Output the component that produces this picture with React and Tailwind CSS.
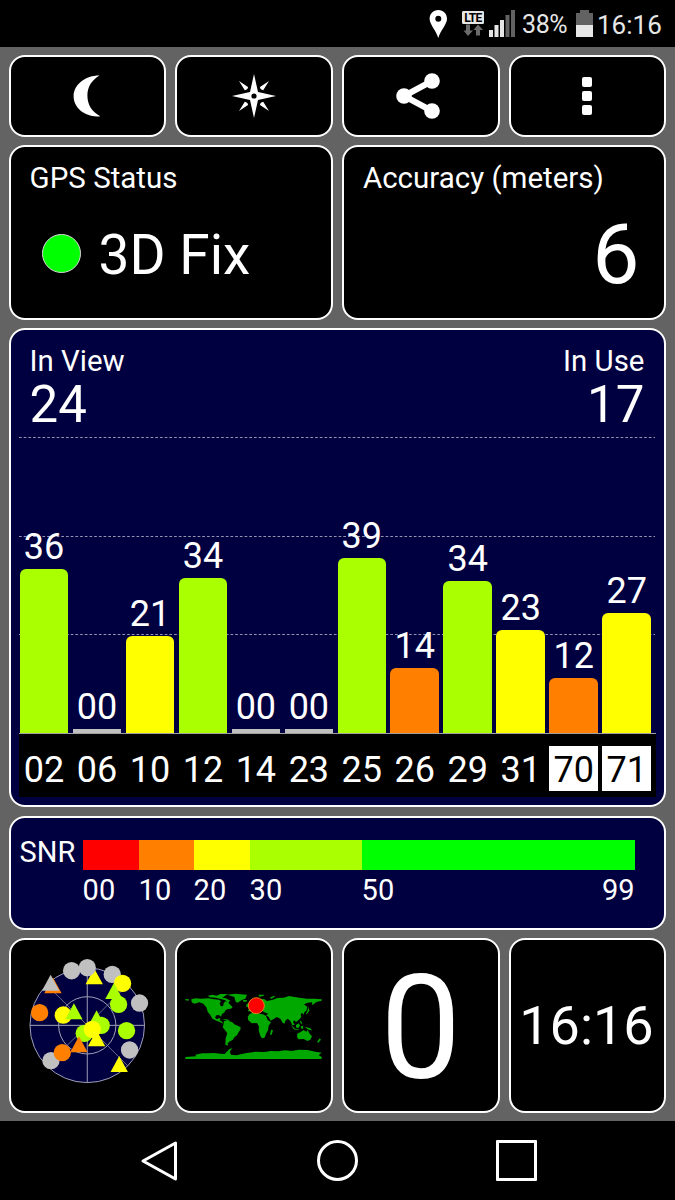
import React from "react";

const satellites = [
  { id: "02", snr: "36", height: 164, color: "bg-[#aaff00]" },
  { id: "06", snr: "00", height: 4.5, color: "bg-[#c0c0c0]", flat: true },
  { id: "10", snr: "21", height: 97, color: "bg-[#ffff00]" },
  { id: "12", snr: "34", height: 155.5, color: "bg-[#aaff00]" },
  { id: "14", snr: "00", height: 4.5, color: "bg-[#c0c0c0]", flat: true },
  { id: "23", snr: "00", height: 4.5, color: "bg-[#c0c0c0]", flat: true },
  { id: "25", snr: "39", height: 175, color: "bg-[#aaff00]" },
  { id: "26", snr: "14", height: 65, color: "bg-[#ff8000]" },
  { id: "29", snr: "34", height: 152, color: "bg-[#aaff00]" },
  { id: "31", snr: "23", height: 103, color: "bg-[#ffff00]" },
  { id: "70", snr: "12", height: 55, color: "bg-[#ff8000]", glonass: true },
  { id: "71", snr: "27", height: 120.5, color: "bg-[#ffff00]", glonass: true },
];

const snrScale = [
  { label: "00", className: "w-[56px]", color: "bg-[#ff0000]" },
  { label: "10", className: "w-[55px]", color: "bg-[#ff8000]" },
  { label: "20", className: "w-[56px]", color: "bg-[#ffff00]" },
  { label: "30", className: "w-[112px]", color: "bg-[#aaff00]" },
  { label: "50", className: "flex-1", color: "bg-[#00ff00]" },
];

const GRAY = "#c0c0c0";
const YELLOW = "#ffff00";
const LIME = "#aaff00";
const ORANGE = "#ff8000";

// drawn in order, later markers cover earlier ones
const skyMarkers = [
  { type: "circle", x: 185, y: 77, fill: GRAY },
  { type: "triangle", x: 253, y: 97, fill: YELLOW },
  { type: "circle", x: 232, y: 68, fill: GRAY },
  { type: "circle", x: 307, y: 88, fill: GRAY },
  { type: "circle", x: 338, y: 115, fill: YELLOW },
  { type: "circle", x: 389, y: 174, fill: GRAY },
  { type: "circle", x: 326, y: 178, fill: LIME },
  { type: "triangle", x: 312, y: 141, fill: LIME },
  { type: "triangle", x: 129, y: 124, fill: ORANGE },
  { type: "triangle", x: 122, y: 116, fill: GRAY },
  { type: "circle", x: 89, y: 203, fill: ORANGE },
  { type: "circle", x: 160, y: 210, fill: YELLOW },
  { type: "triangle", x: 192, y: 202, fill: LIME },
  { type: "circle", x: 274, y: 241, fill: LIME },
  { type: "triangle", x: 260, y: 223, fill: LIME },
  { type: "circle", x: 223, y: 265, fill: LIME },
  { type: "triangle", x: 260, y: 283, fill: YELLOW },
  { type: "circle", x: 247, y: 253, fill: YELLOW },
  { type: "circle", x: 350, y: 257, fill: LIME },
  { type: "circle", x: 359, y: 315, fill: GRAY },
  { type: "circle", x: 123, y: 347, fill: GRAY },
  { type: "circle", x: 157, y: 323, fill: ORANGE },
  { type: "triangle", x: 207, y: 301, fill: ORANGE },
  { type: "triangle", x: 328, y: 360, fill: YELLOW },
];

const Panel = ({ className = "", children }) => (
  <div className={`rounded-[16px] border-2 border-white ${className}`}>
    {children}
  </div>
);

const StatusBar = () => (
  <div className="flex h-[47px] items-start bg-black pl-[429px] text-[#e6e6e6]">
    <svg className="mt-[10px] h-[28px] w-[18px]" viewBox="0 0 18 28">
      <path
        fill="#fff"
        fillRule="evenodd"
        d="M9.3 0C4.4 0 .6 3.8 .6 8.8C.6 14.5 7 20.5 9.3 28C11.5 20.5 18 14.5 18 8.8C18 3.8 14.2 0 9.3 0ZM9.3 5.7a3 3 0 1 1 0 6a3 3 0 1 1 0-6Z"
      />
    </svg>
    <div className="mt-[11px] ml-[15px] flex w-[22px] flex-col items-center">
      <div className="flex h-[13px] w-[22px] items-center justify-center rounded-[1px] border border-[#e6e6e6] bg-[#e6e6e6] text-[12px] leading-none font-bold tracking-[-0.6px] text-black">
        LTE
      </div>
      <svg className="h-[12px] w-[20px]" viewBox="0 0 20 12" fill="#6b6b6b">
        <path d="M3 .5h4v6h3L5 12 .5 6.5H3zM13 11.5h4V6h3L15 .5 10.5 6H13z" />
      </svg>
    </div>
    <svg className="mt-[10px] ml-[4px] h-[27px] w-[28px]" viewBox="0 0 28 27">
      <path fill="#e6e6e6" d="M1 20h4v7H1zM6.5 15h4v12h-4zM12 10h4v17h-4z" />
      <path fill="#626262" d="M17.5 5h4v22h-4zM23 0h4v27h-4z" />
    </svg>
    <span className="mt-[12px] ml-[6px] w-[46px] text-[25px] leading-none tracking-[-0.4px]">
      38%
    </span>
    <svg className="mt-[10px] ml-[8px] h-[27px] w-[17px]" viewBox="0 0 17 27">
      <path fill="#626262" d="M4 0h9v3h4v12H0V3h4z" />
      <path fill="#e6e6e6" d="M0 15h17v12H0z" />
    </svg>
    <span className="mt-[12px] ml-[4px] text-[26px] leading-none">16:16</span>
  </div>
);

const ToolBar = () => (
  <div className="grid h-[82px] grid-cols-4 gap-[8.8px]">
    <Panel className="flex items-center justify-center bg-black">
      <svg className="mr-px h-[44px] w-[44px]" viewBox="0 0 44 44" fill="#fff">
        <path d="M34.6 1.4C22 1 8.6 9.5 8.6 22.3C8.6 35 22 44 35.3 42.2C26.5 37.5 22.4 30.5 22.4 21.5C22.4 13 26.5 6 34.6 1.4Z" />
      </svg>
    </Panel>
    <Panel className="flex items-center justify-center bg-black">
      <svg className="h-[44px] w-[44px]" viewBox="0 0 44 44" fill="#fff">
        <path
          fillRule="evenodd"
          d="M22 0 26 18 44 22 26 26 22 44 18 26 0 22 18 18ZM22 19.4a2.6 2.6 0 1 0 0 5.2a2.6 2.6 0 1 0 0-5.2Z"
        />
        <path d="M7 7 16 13Q16 15.5 12.8 16.2ZM37 7 28 13Q28 15.5 31.2 16.2ZM7 37 16 31Q16 28.5 12.8 27.8ZM37 37 28 31Q28 28.5 31.2 27.8Z" />
      </svg>
    </Panel>
    <Panel className="flex items-center justify-center bg-black">
      <svg className="mr-[6px] h-[46px] w-[44px]" viewBox="0 0 44 46" fill="#fff">
        <path d="M36 8 8 23 36 38" fill="none" stroke="#fff" strokeWidth="6" />
        <circle cx="36" cy="8" r="7.8" />
        <circle cx="8" cy="23" r="7.8" />
        <circle cx="36" cy="38" r="7.8" />
      </svg>
    </Panel>
    <Panel className="flex flex-col items-center justify-center gap-1 bg-black">
      <span className="h-[10px] w-[10px] rounded-[2px] bg-white" />
      <span className="h-[10px] w-[10px] rounded-[2px] bg-white" />
      <span className="h-[10px] w-[10px] rounded-[2px] bg-white" />
    </Panel>
  </div>
);

const SatelliteChart = () => (
  <Panel className="relative mb-px flex h-[479px] flex-col bg-[#000040] pt-[17px]">
    <div className="flex justify-between pr-[20px] pl-[19px]">
      <div>
        <div className="text-[29.4px] leading-[29px]">In View</div>
        <div className="mt-[4px] text-[51px] leading-[50px]">24</div>
      </div>
      <div className="text-right">
        <div className="text-[29.4px] leading-[29px]">In Use</div>
        <div className="mt-[4px] text-[51px] leading-[50px]">17</div>
      </div>
    </div>

    {/* SNR grid lines behind the bars */}
    <svg
      className="absolute top-[106px] left-[8px] h-[200px] w-[636px]"
      viewBox="0 0 636 200"
    >
      <path
        d="M0 1.5H636M0 100.5H636M0 198.5H636"
        stroke="#9494b0"
        strokeWidth="1"
        strokeDasharray="2.7 2"
      />
    </svg>

    <div className="relative mt-auto mb-[8px] ml-[8px] w-[637px]">
      <div className="flex items-end gap-[4.3px] border-b border-[#a0a0a0] pl-px">
        {satellites.map((sat) => (
          <div key={sat.id} className="flex w-[48.7px] flex-col items-center">
            <span className="mb-1 text-[36px] leading-none">{sat.snr}</span>
            <div
              className={`w-full ${sat.color} ${sat.flat ? "" : "rounded-t-[6px]"}`}
              style={{ height: sat.height }}
            />
          </div>
        ))}
      </div>
      <div className="flex h-[63px] gap-[4.3px] bg-black pt-[12px] pl-px">
        {satellites.map((sat) => (
          <div
            key={sat.id}
            className={`flex h-[45px] w-[48.7px] justify-center pt-[6px] text-[36px] leading-none ${
              sat.glonass ? "bg-white text-black" : ""
            }`}
          >
            {sat.id}
          </div>
        ))}
      </div>
    </div>
  </Panel>
);

const SnrLegend = () => (
  <Panel className="flex h-[114px] bg-[#000040] pt-[22px] pl-[9px]">
    <div className="-mt-[2px] w-[63px] text-[29px] leading-none">SNR</div>
    <div className="relative flex w-[552px]">
      {snrScale.map((step) => (
        <div key={step.label} className={step.className}>
          <div className={`h-[30px] ${step.color}`} />
          <div className="mt-[6px] text-[29px] leading-none">{step.label}</div>
        </div>
      ))}
      <div className="absolute top-[36px] right-0 text-[29px] leading-none">99</div>
    </div>
  </Panel>
);

const SkyView = () => (
  <svg className="h-[160px] w-[154px]" viewBox="3 0 462 480">
    <circle cx="232" cy="241" r="172" fill="#000040" />
    <g fill="none" stroke="#a0a0b8" strokeWidth="3">
      <circle cx="232" cy="241" r="172" />
      <circle cx="232" cy="241" r="86" />
      <path d="M60 241H404M232 69V413" />
      <path d="M110 119 354 363M354 119 110 363" strokeWidth="2" />
    </g>
    {skyMarkers.map((m, i) =>
      m.type === "circle" ? (
        <circle key={i} cx={m.x} cy={m.y} r="26" fill={m.fill} />
      ) : (
        <path
          key={i}
          d={`M${m.x} ${m.y - 27}l26 48h-52z`}
          fill={m.fill}
        />
      )
    )}
  </svg>
);

const WorldMap = () => (
  <svg className="ml-[2px] h-[90px] w-[154px] shrink-0" viewBox="9 0 462 270">
    <g fill="#00a800">
      {/* the Americas and Greenland */}
      <path d="M31 57 42 58 41 62 31 61ZM49 58 62 55 78 56 100 55 118 58 132 59 138 64 134 70 137 78 144 79 146 70 151 64 160 67 164 73 173 81 168 86 159 87 151 91 149 97 141 102 138 110 132 105 124 106 120 113 126 118 132 114 137 116 134 121 142 125 143 131 136 127 124 122 112 116 106 105 98 95 94 82 85 71 73 67 58 71 50 67Z" />
      <path d="M99 47 112 44 125 47 136 42 158 42 150 48 142 53 153 55 166 62 159 68 151 61 137 57 122 53 104 52Z" />
      <path d="M156 44 181 41 216 44 211 56 199 61 188 68 182 65 178 51Z" />
      <path d="M147 123 160 122 172 127 178 133 196 141 197 147 190 158 186 166 178 172 173 180 165 184 158 190 159 197 151 194 152 175 157 160 152 153 143 142 145 135Z" />
      {/* Europe, Asia and Africa */}
      <path d="M218 94 224 84 221 78 233 73 242 64 252 58 267 57 276 63 294 59 307 54 326 53 342 48 359 51 373 53 396 56 420 56 440 58 440 62 424 66 412 76 411 67 398 68 387 73 397 81 394 92 388 97 386 104 382 99 377 102 379 111 371 120 363 126 358 121 354 126 359 135 352 136 346 123 338 116 331 122 329 131 323 128 316 116 305 111 300 115 287 122 281 111 273 106 280 101 268 97 260 91 249 91 241 87 229 94Z" />
      <path d="M224 102 237 97 251 101 264 103 273 108 278 120 288 127 281 137 279 151 273 161 269 173 261 175 256 168 251 151 252 140 246 129 230 130 220 121 218 111ZM288 149 294 151 290 164 285 164Z" />
      <path d="M215 73 219 70 223 77 217 82 213 79ZM204 60 216 60 214 65 205 65ZM250 44 268 44 265 48 253 50ZM283 54 297 47 300 50 290 56Z" />
      <path d="M400 80 403 93 396 102 392 103 397 94ZM348 134 360 146 373 149 370 151 356 148ZM363 135 372 130 375 137 369 145 363 142ZM377 139 385 138 384 147 378 145ZM389 140 406 145 411 151 400 149ZM375 121 380 126 382 134 376 128Z" />
      <path d="M367 161 378 155 386 150 394 155 398 150 403 160 411 169 406 179 397 183 386 177 371 178 366 171ZM434 175 438 179 430 188 426 186Z" />
      <path d="M142 118 157 118 165 123 155 122Z" />
      {/* Antarctica */}
      <path d="M31 231 63 229 61 224 82 220 100 220 117 219 136 221 149 222 163 207 172 205 164 215 168 224 184 226 211 220 242 215 268 216 288 213 310 214 331 211 350 213 371 209 398 210 421 215 440 218 431 225 440 231V237H31Z" />
    </g>
    <circle cx="244" cy="77" r="24" fill="#ff0000" stroke="#e69b20" strokeWidth="2.5" />
  </svg>
);

const NavBar = () => (
  <div className="flex h-[79px] justify-center bg-black">
    <div className="grid w-[536px] grid-cols-3 items-center justify-items-center">
      <svg className="h-[42px] w-[38px]" viewBox="0 0 38 42">
        <path
          d="M35.5 3V39L3 21Z"
          fill="none"
          stroke="#fff"
          strokeWidth="3"
          strokeLinejoin="round"
        />
      </svg>
      <div className="h-[41px] w-[41px] rounded-full border-3 border-white" />
      <div className="h-[41px] w-[41px] rounded-[1px] border-3 border-white" />
    </div>
  </div>
);

const App = () => (
  <div className="flex h-[1200px] w-[675px] flex-col overflow-hidden bg-[#636363] font-['Roboto',sans-serif] text-white">
    <StatusBar />

    <div className="flex h-[1074px] flex-col gap-2 px-[8.6px] pt-2">
      <ToolBar />

      <div className="grid h-[175px] grid-cols-2 gap-[8.8px]">
        <Panel className="bg-black pt-[17px] pl-[19px]">
          <div className="text-[29.5px] leading-[29px]">GPS Status</div>
          <div className="mt-[34px] flex items-center pl-[12px]">
            <span className="mb-[3px] h-[39px] w-[39px] rounded-full border border-[#d8d8d8] bg-[#00ff00]" />
            <span className="mt-px ml-[18px] text-[55px] leading-none">3D Fix</span>
          </div>
        </Panel>
        <Panel className="flex flex-col bg-black pt-[17px] pr-[25px] pl-[19px]">
          <div className="text-[29.5px] leading-[29px]">Accuracy (meters)</div>
          <div className="mt-[20px] text-right text-[84px] leading-none">6</div>
        </Panel>
      </div>

      <SatelliteChart />
      <SnrLegend />

      <div className="grid h-[175px] grid-cols-4 gap-[8.8px]">
        <Panel className="flex justify-center bg-black pt-[5px]">
          <SkyView />
        </Panel>
        <Panel className="flex justify-center bg-black pt-[40px]">
          <WorldMap />
        </Panel>
        <Panel className="flex justify-center bg-black pt-[17px]">
          <span className="text-[144px] leading-none">0</span>
        </Panel>
        <Panel className="flex justify-center bg-black pt-[59px] pr-[2px]">
          <span className="text-[54px] leading-none">16:16</span>
        </Panel>
      </div>
    </div>

    <NavBar />
  </div>
);

export default App;
